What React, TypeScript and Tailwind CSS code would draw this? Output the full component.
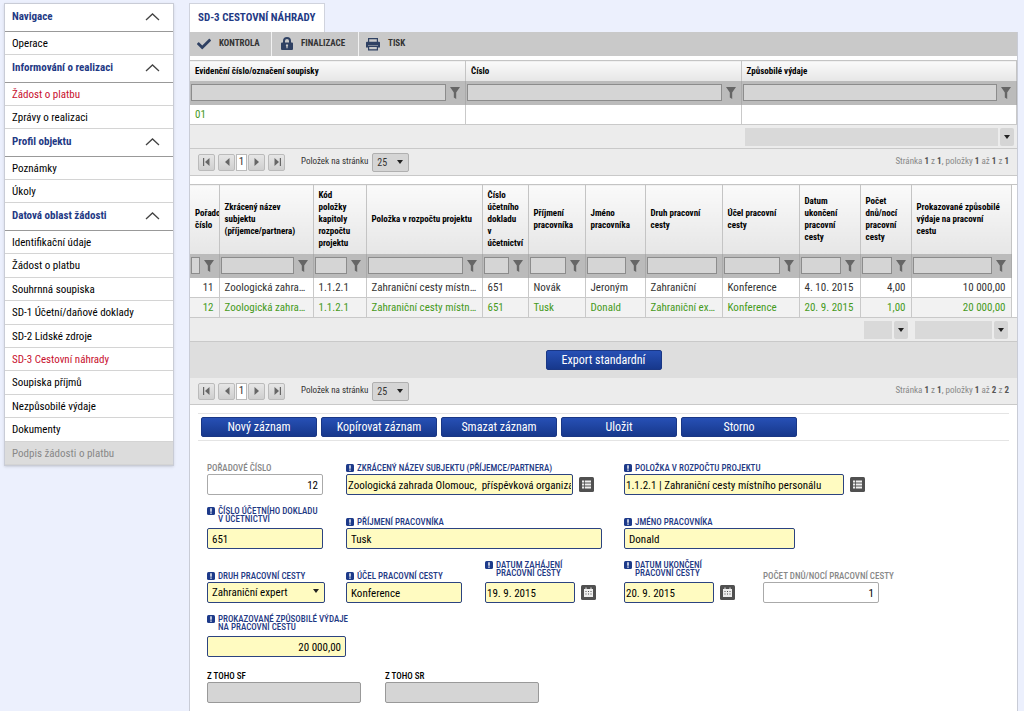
import React, { useId, useState } from 'react';
import { FaCheck } from 'react-icons/fa';
import clsx from 'clsx';

interface NavGroup {
  title: string;
  items: string[];
  listClass?: string;
}

const NAV: NavGroup[] = [
  { title: 'Navigace', items: ['Operace'] },
  { title: 'Informování o realizaci', items: ['Žádost o platbu', 'Zprávy o realizaci'] },
  { title: 'Profil objektu', items: ['Poznámky', 'Úkoly'] },
  {
    title: 'Datová oblast žádosti',
    listClass: 'grid auto-rows-fr h-[234px]',
    items: [
      'Identifikační údaje',
      'Žádost o platbu',
      'Souhrnná soupiska',
      'SD-1 Účetní/daňové doklady',
      'SD-2 Lidské zdroje',
      'SD-3 Cestovní náhrady',
      'Soupiska příjmů',
      'Nezpůsobilé výdaje',
      'Dokumenty',
      'Podpis žádosti o platbu',
    ],
  },
];

const ACTIVE = ['1-Žádost o platbu', '3-SD-3 Cestovní náhrady'];
const DISABLED = ['3-Podpis žádosti o platbu'];

interface Column {
  title: string;
  width?: string;
  right?: boolean;
  noFilter?: boolean;
  sum?: boolean;
}

const SUMMARY_COLUMNS: Column[] = [
  { title: 'Evidenční číslo/označení soupisky' },
  { title: 'Číslo' },
  { title: 'Způsobilé výdaje', sum: true },
];

const TRIP_COLUMNS: Column[] = [
  { title: 'Pořadové číslo', width: 'w-[29px]', right: true },
  { title: 'Zkrácený název subjektu (příjemce/partnera)', width: 'w-[94px]' },
  { title: 'Kód položky kapitoly rozpočtu projektu', width: 'w-[53px]' },
  { title: 'Položka v rozpočtu projektu', width: 'w-[116px]' },
  { title: 'Číslo účetního dokladu v účetnictví', width: 'w-[46px]' },
  { title: 'Příjmení pracovníka', width: 'w-[57px]' },
  { title: 'Jméno pracovníka', width: 'w-[60px]' },
  { title: 'Druh pracovní cesty', width: 'w-[77px]', noFilter: true },
  { title: 'Účel pracovní cesty', width: 'w-[77px]' },
  { title: 'Datum ukončení pracovní cesty', width: 'w-[61px]' },
  { title: 'Počet dnů/nocí pracovní cesty', width: 'w-[51px]', right: true, sum: true },
  { title: 'Prokazované způsobilé výdaje na pracovní cestu', right: true, sum: true },
];

const TRIPS = [
  ['11', 'Zoologická zahrada', '1.1.2.1', 'Zahraniční cesty místního personálu', '651', 'Novák', 'Jeroným', 'Zahraniční', 'Konference', '4. 10. 2015', '4,00', '10 000,00'],
  ['12', 'Zoologická zahrada', '1.1.2.1', 'Zahraniční cesty místního personálu', '651', 'Tusk', 'Donald', 'Zahraniční expert', 'Konference', '20. 9. 2015', '1,00', '20 000,00'],
];

const Funnel = () => (
  <svg viewBox="0 0 10 12" className="w-[10px] h-3 shrink-0" fill="#666">
    <path d="M0 0h10L6.2 5.500V12L3.800 10.500v-5z" />
  </svg>
);

const Caret = ({ className }: { className?: string }) => (
  <svg viewBox="0 0 6 4" className={clsx('w-[6px] h-1', className)} fill="#222">
    <path d="M0 0h6L3 4z" />
  </svg>
);

const LockIcon = () => (
  <svg viewBox="0 0 12 14" className="w-3 h-[14px] shrink-0" fill="#2f4163">
    <path d="M2 6V4a4 4 0 0 1 8 0v2h-2V4a2 2 0 0 0-4 0v2z" />
    <path fillRule="evenodd" d="M1 5.500h10a1 1 0 0 1 1 1V12a1 1 0 0 1-1 1H1a1 1 0 0 1-1-1V6.500a1 1 0 0 1 1-1zM6 7.300a1.200 1.200 0 0 0-.6 2.200V11.300h1.200V9.500A1.200 1.200 0 0 0 6 7.300z" />
  </svg>
);

const PrintIcon = () => (
  <svg viewBox="0 0 14 14" className="w-[14px] h-[14px] shrink-0" fill="#2f4163">
    <path fillRule="evenodd" d="M2 1h10v4H2zM3.200 2.200v2.800h7.600V2.200z" />
    <path d="M1 4.800h12a1 1 0 0 1 1 1V10.500h-2V8.500H2v2H0V5.800a1 1 0 0 1 1-1z" />
    <path fillRule="evenodd" d="M2 9h10v4.500H2zM3.200 10v2.300h7.600V10z" />
  </svg>
);

const Sidebar = () => (
  <nav className="w-[170px] shrink-0 self-start border border-[#c9ccd6] bg-white shadow-sm">
    {NAV.map((group, g) => (
      <section key={group.title}>
        <button className="flex h-7 w-full items-center justify-between border-b border-[#999] pb-px pl-[7px] pr-[13px] text-[11px] font-bold text-[#1f3a85]">
          {group.title}
          <svg viewBox="0 0 15 8" className="w-[15px] h-2" fill="none" stroke="#444" strokeWidth="1.300">
            <path d="M1 7l6.500-6 6.500 6" />
          </svg>
        </button>
        <ul className={group.listClass}>
          {group.items.map((item) => {
            const key = `${g}-${item}`;
            return (
              <li key={key} className="h-full min-h-[23px] border-b border-[#d4d4d4]">
                <a
                  href="#"
                  className={clsx(
                    'flex h-full min-h-[22px] items-center pt-[2px] pl-[7px] text-[11px]',
                    ACTIVE.includes(key) && 'text-[#c8102e]',
                    DISABLED.includes(key) && 'bg-[#dcdcdc] text-[#888]',
                  )}
                >
                  {item}
                </a>
              </li>
            );
          })}
        </ul>
      </section>
    ))}
  </nav>
);

const toolClass =
  'flex items-center gap-2 border-r border-[#f2f2f2] pl-[7px] text-[9px] font-bold text-[#333]';

const Toolbar = () => (
  <div className="flex h-6 bg-[#c9c9c9]">
    <button className={clsx(toolClass, 'w-[82px]')}>
      <FaCheck size={14} color="#2f4163" />
      KONTROLA
    </button>
    <button className={clsx(toolClass, 'w-[87px] pl-[9px]')}>
      <LockIcon />
      FINALIZACE
    </button>
    <button className={clsx(toolClass, 'border-none')}>
      <PrintIcon />
      TISK
    </button>
  </div>
);

interface GridProps {
  columns: Column[];
  rows: string[][];
  selected: number;
  headClass: string;
  spacer?: boolean;
}

const DataGrid: React.FC<GridProps> = ({ columns, rows, selected, headClass, spacer }) => (
  <table className="w-full table-fixed border-collapse border-t border-[#c4c4c4] text-[11px]">
    <colgroup>
      {columns.map((c) => (
        <col key={c.title} className={c.width} />
      ))}
      {spacer && <col className="w-[6px]" />}
    </colgroup>
    <thead>
      <tr className={headClass}>
        {columns.map((c) => (
          <th
            key={c.title}
            className="overflow-hidden border-r border-[#c4c4c4] bg-linear-to-b from-[#fafafa] to-[#e6e6e6] py-0 pr-2 pl-[5px] text-left align-middle text-[9px] leading-3 font-bold text-black"
          >
            {c.title}
          </th>
        ))}
        {spacer && <td className="bg-white" />}
      </tr>
      <tr className="h-6">
        {columns.map((c) => (
          <td key={c.title} className="border-r border-[#ababab] bg-[#bbb] p-0">
            <div className="flex items-center gap-1 pr-[5px] pl-px">
              <input
                aria-label={c.title}
                className="h-[17px] w-0 min-w-0 flex-1 border border-[#8c8c8c] bg-[#d5d5d5]"
              />
              {!c.noFilter && <Funnel />}
            </div>
          </td>
        ))}
        {spacer && <td className="bg-white" />}
      </tr>
    </thead>
    <tbody>
      {rows.map((row, r) => (
        <tr key={r} className="h-5">
          {row.map((cell, i) => (
            <td
              key={i}
              className={clsx(
                'truncate border-r border-b border-[#c9c9c9] pt-px pb-0 pl-[5px] leading-4',
                columns[i].right ? 'pr-[5px] text-right' : 'pr-1',
                r === selected ? 'text-[#469a1c]' : 'text-[#333]',
                r % 2 === 1 && 'bg-[#f2f2f2]',
              )}
            >
              {cell}
            </td>
          ))}
          {spacer && <td className="bg-white" />}
        </tr>
      ))}
    </tbody>
    <tfoot>
      <tr className="h-6 border-y border-[#c9c9c9] bg-[#ececec]">
        {columns.map((c) => (
          <td key={c.title} className="p-0">
            {c.sum && (
              <div className="flex gap-[2px] pr-[3px] pl-1">
                <span className="h-[18px] flex-1 bg-[#d9d9d9]" />
                <button aria-label="Souhrn" className="flex h-[18px] w-[14px] items-center justify-center rounded-xs bg-[#d5d5d5]">
                  <Caret />
                </button>
              </div>
            )}
          </td>
        ))}
        {spacer && <td />}
      </tr>
    </tfoot>
  </table>
);

const pagerButton =
  'flex h-[17px] w-[17px] items-center justify-center rounded-xs border border-[#bbb] bg-linear-to-b from-[#e6e6e6] to-[#cfcfcf]';

const Arrow = ({ flip, bar }: { flip?: boolean; bar?: boolean }) => (
  <svg viewBox="0 0 8 8" className={clsx('w-2 h-2', flip && 'rotate-180')} fill="#666">
    <path d="M6.500 0v8L2 4z" />
    {bar && <path d="M0 0h1.200v8H0z" />}
  </svg>
);

const Pager = ({ total }: { total: number }) => {
  const id = useId();
  return (
    <div className="flex h-[27px] items-center border-b border-[#c9c9c9] bg-[#ececec] px-2 text-[9px] text-[#333]">
      <button aria-label="První" className={pagerButton}><Arrow bar /></button>
      <button aria-label="Předchozí" className={clsx(pagerButton, 'ml-[3px]')}><Arrow /></button>
      <span className="mx-px flex h-[17px] w-[11px] items-center justify-center border border-[#bbb] bg-white text-[11px]">1</span>
      <button aria-label="Další" className={pagerButton}><Arrow flip /></button>
      <button aria-label="Poslední" className={clsx(pagerButton, 'ml-[3px]')}><Arrow flip bar /></button>
      <label htmlFor={id} className="mr-1 ml-4">Položek na stránku</label>
      <div className="relative">
        <select id={id} className="block h-[19px] w-[37px] appearance-none rounded-xs border border-[#b0b0b0] bg-[#d5d5d5] pl-1 text-[10px]">
          <option>25</option>
        </select>
        <Caret className="pointer-events-none absolute top-[7px] right-[6px]" />
      </div>
      <p className="ml-auto text-[#888]">
        Stránka <b className="text-[#555]">1</b> z <b className="text-[#555]">1</b>, položky <b className="text-[#555]">1</b> až{' '}
        <b className="text-[#555]">{total}</b> z <b className="text-[#555]">{total}</b>
      </p>
    </div>
  );
};

const BlueButton = ({ children }: { children: React.ReactNode }) => (
  <button className="h-5 w-[116px] rounded-xs border border-[#1a3785] bg-linear-to-b from-[#2750b5] to-[#17388c] text-[12px] leading-4 text-white">
    {children}
  </button>
);

interface FieldProps {
  label: React.ReactNode;
  value?: string;
  required?: boolean;
  right?: boolean;
  tight?: boolean;
  gray?: boolean;
  width?: string;
  span?: string;
  labelClass?: string;
  options?: string[];
  picker?: 'list' | 'calendar';
}

const PickerIcon = ({ kind }: { kind: 'list' | 'calendar' }) => (
  <svg viewBox="0 0 15 15" className="w-[15px] h-[15px]">
    <rect width="15" height="15" rx="1.500" fill="#505050" />
    {kind === 'list' ? (
      <path d="M3 3.500h2v2H3zM5.800 3.500H12v2H5.800zM3 6.500h2v2H3zM5.800 6.500H12v2H5.800zM3 9.500h2v2H3zM5.800 9.500H12v2H5.800z" fill="#eee" />
    ) : (
      <>
        <path d="M3 4h9v8H3zM4.500 2.500h1V4h-1zM9.500 2.500h1V4h-1z" fill="#eee" />
        <path d="M4.500 6h1v1h-1zM7 6h1v1H7zM9.500 6h1v1h-1zM4.500 8.500h1v1h-1zM7 8.500h1v1H7zM9.500 8.500h1v1h-1z" fill="#505050" />
      </>
    )}
  </svg>
);

const Field: React.FC<FieldProps> = ({
  label,
  value = '',
  required,
  right,
  tight,
  gray,
  width = 'w-[116px]',
  span,
  labelClass,
  options,
  picker,
}) => {
  const id = useId();
  const [text, setText] = useState(value);
  const box = clsx(
    'block h-[21px] rounded-xs border pt-px text-[11px] text-black',
    width,
    required ? 'border-[#2c4380] bg-[#fffbc1]' : gray ? 'border-[#999] bg-[#d5d5d5]' : 'border-[#aaa] bg-white',
    right ? 'pl-1 pr-1 text-right' : tight ? 'px-px' : 'px-1',
  );
  return (
    <div className={span}>
      <label
        htmlFor={id}
        className={clsx(
          'flex gap-[3px] pb-[2px] text-[9px] leading-2 font-medium whitespace-nowrap',
          required ? 'text-[#1f3a85]' : gray ? 'text-black' : 'text-[#888]',
          labelClass,
        )}
      >
        {required && (
          <svg viewBox="0 0 8 8" className="w-2 h-2 shrink-0">
            <rect width="8" height="8" rx="1.500" fill="#1d3a8a" />
            <path d="M3.300 1.200h1.400v3.500H3.300zM3.300 5.600h1.400v1.200H3.300z" fill="#fff" />
          </svg>
        )}
        <span>{label}</span>
      </label>
      <div className="flex items-center gap-[6px]">
        {options ? (
          <div className="relative">
            <select id={id} className={clsx(box, 'appearance-none')}>
              {options.map((o) => (
                <option key={o}>{o}</option>
              ))}
            </select>
            <Caret className="pointer-events-none absolute top-[7px] right-[6px]" />
          </div>
        ) : (
          <input id={id} className={box} value={text} onChange={(e) => setText(e.target.value)} />
        )}
        {picker && (
          <button aria-label="Vybrat">
            <PickerIcon kind={picker} />
          </button>
        )}
      </div>
    </div>
  );
};

const TripForm = () => (
  <form className="px-2 pt-2" onSubmit={(e) => e.preventDefault()}>
    <div className="flex gap-1 border-y border-[#e4e4e4] px-[3px] py-[3px]">
      {['Nový záznam', 'Kopírovat záznam', 'Smazat záznam', 'Uložit', 'Storno'].map((t) => (
        <BlueButton key={t}>{t}</BlueButton>
      ))}
    </div>
    <div className="grid auto-rows-[54px] grid-cols-[repeat(5,139px)] items-end pl-[9px]">
      <Field label="POŘADOVÉ ČÍSLO" value="12" right />
      <Field label="ZKRÁCENÝ NÁZEV SUBJEKTU (PŘÍJEMCE/PARTNERA)" value="Zoologická zahrada Olomouc,  příspěvková organizace" required tight width="w-[227px]" span="col-span-2" picker="list" />
      <Field label="POLOŽKA V ROZPOČTU PROJEKTU" value="1.1.2.1 | Zahraniční cesty místního personálu" required tight width="w-[220px]" span="col-span-2" picker="list" />

      <Field label={<>ČÍSLO ÚČETNÍHO DOKLADU<br />V ÚČETNICTVÍ</>} value="651" required labelClass="mb-[3px]" />
      <Field label="PŘÍJMENÍ PRACOVNÍKA" value="Tusk" required width="w-[256px]" span="col-span-2" />
      <Field label="JMÉNO PRACOVNÍKA" value="Donald" required width="w-[171px]" span="col-span-2" />

      <Field label="DRUH PRACOVNÍ CESTY" required width="w-[118px]" options={['Zahraniční expert', 'Zahraniční']} />
      <Field label="ÚČEL PRACOVNÍ CESTY" value="Konference" required />
      <Field label={<>DATUM ZAHÁJENÍ<br />PRACOVNÍ CESTY</>} value="19. 9. 2015" required tight width="w-[90px]" labelClass="mb-[3px]" picker="calendar" />
      <Field label={<>DATUM UKONČENÍ<br />PRACOVNÍ CESTY</>} value="20. 9. 2015" required tight width="w-[90px]" labelClass="mb-[3px]" picker="calendar" />
      <Field label="POČET DNŮ/NOCÍ PRACOVNÍ CESTY" value="1" right />

      <Field label={<>PROKAZOVANÉ ZPŮSOBILÉ VÝDAJE<br />NA PRACOVNÍ CESTU</>} value="20 000,00" required right width="w-[139px]" labelClass="mb-[3px]" />
    </div>
    <div className="mt-[15px] flex gap-6 pb-[7px] pl-[9px]">
      <Field label="Z TOHO SF" gray width="w-[154px]" />
      <Field label="Z TOHO SR" gray width="w-[154px]" />
    </div>
  </form>
);

const App: React.FC = () => (
  <div className="flex min-h-screen gap-[15px] bg-[#ecf0fd] pt-[3px] pr-[6px] pl-1 font-['Roboto_Condensed','Liberation_Sans_Narrow','Roboto',sans-serif] text-black">
    <Sidebar />
    <div className="flex min-w-0 flex-1 flex-col">
      <h1 className="self-start border border-b-0 border-[#d0d3dd] bg-white px-2 text-[11px] leading-7 font-bold text-[#1f3a85]">
        SD-3 CESTOVNÍ NÁHRADY
      </h1>
      <main className="flex-1 border-x border-[#c9ccd6] bg-white">
        <Toolbar />
        <div className="pt-1">
          <DataGrid columns={SUMMARY_COLUMNS} rows={[['01', '', '']]} selected={0} headClass="h-5" />
          <Pager total={1} />
        </div>
        <div className="pt-2">
          <DataGrid columns={TRIP_COLUMNS} rows={TRIPS} selected={1} headClass="h-[69px]" spacer />
          <div className="flex h-9 items-center justify-center bg-[#dedede]">
            <BlueButton>Export standardní</BlueButton>
          </div>
          <Pager total={2} />
        </div>
        <TripForm />
      </main>
    </div>
  </div>
);

export default App;
